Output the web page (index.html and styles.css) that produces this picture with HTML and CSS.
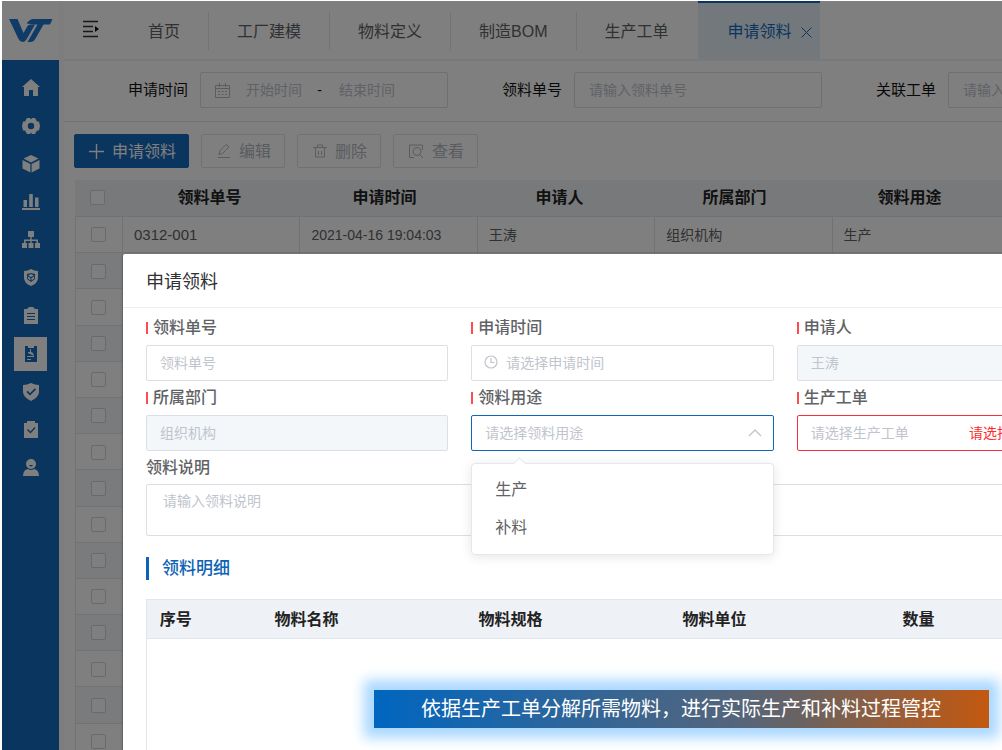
FILE: index.html
```html
<!DOCTYPE html>
<html lang="zh-CN">
<head>
<meta charset="utf-8">
<title>申请领料</title>
<link rel="stylesheet" href="styles.css">
</head>
<body>
<div class="app">
  <aside class="sidebar">
    <div class="logo">
      <svg width="44" height="24" viewBox="0 0 44 24" aria-label="VT" fill="#2076cc"><path d="M0 0h8.500l6 14 4-7q1-1.500 3-1.500H26l-8 14q-2 3.500-4.500 3.500T9.500 20z"/><path d="M17.500 4.500Q21 0 24 0h19.500L41 5.500h-6.500l-8 14q-2 3.500-5 3.500h-3l10-17.500h-3z"/></svg>
    </div>
    <nav class="side-nav">
      <a href="#" class="side-item" aria-label="首页"><svg viewBox="0 0 18 18"><path d="M9 0 0 8h2v9h5v-6h4v6h5V8h2z"/></svg></a>
      <a href="#" class="side-item" aria-label="设置"><svg viewBox="0 0 18 18"><path fill-rule="evenodd" d="M5 1h3l1 1.500L10 1h3l2 3.500h2L18 9l-1 4.500h-2L13 17h-3l-1-1.500L8 17H5l-2-3.500H1L0 9l1-4.500h2zM9 5.800a3.200 3.200 0 1 0 0 6.400 3.200 3.200 0 0 0 0-6.400z"/></svg></a>
      <a href="#" class="side-item" aria-label="物料"><svg viewBox="0 0 18 18"><path d="m9 0 7.500 3.500L9 7.500 1.500 3.500zM.5 5 8.400 9v8.500L.5 13.500zM17.500 5 9.600 9v8.500l7.900-4z"/></svg></a>
      <a href="#" class="side-item" aria-label="统计"><svg viewBox="0 0 18 18"><path d="M0 15h18v2H0zM1.500 7h3.500v7H1.500zM7.200 1h3.600v13H7.200zM13 4.500h3.500V14H13z"/></svg></a>
      <a href="#" class="side-item" aria-label="组织"><svg viewBox="0 0 18 18"><path d="M6 0h6v6H9.700v2.500H16V12h2v5h-5v-5h1.500v-2H9.700v2h1.800v5h-5v-5h1.800v-2H3.500v2H5v5H0v-5h2V8.500h6.300V6H6z"/></svg></a>
      <a href="#" class="side-item" aria-label="防护"><svg viewBox="0 0 18 18"><path fill-rule="evenodd" d="M9 0q3 2 7 2v7q0 5-7 8-7-3-7-8V2q4 0 7-2zM5 5v5l4 3 4-3V5L9 4z"/><path d="m9 5 3 1.500-3 1.500-3-1.500zM5.800 7.500 8.500 9v2.500l-2.700-2zM12.200 7.500 9.500 9v2.500l2.700-2z"/></svg></a>
      <a href="#" class="side-item" aria-label="单据"><svg viewBox="0 0 18 18"><path fill-rule="evenodd" d="M2 2h3l2-2h4l2 2h3v15H2zM5 6v1h8V6zM5 9v1h8V9zM5 12v1h8v-1z"/></svg></a>
      <a href="#" class="side-item side-item-active" aria-label="领料"><svg viewBox="0 0 18 18"><path fill-rule="evenodd" d="M3 1h3v2h6V1h3v16H3zM8 4v3H6v1l6 3-1-3-2-1V4zM5 11v1h7v-1zM5 14v1h4v-1z"/></svg></a>
      <a href="#" class="side-item" aria-label="质量"><svg viewBox="0 0 18 18"><path fill-rule="evenodd" d="M9 0q4 2 8 2v7q0 5-8 9-8-4-8-9V2q4 0 8-2zM4.500 9 8 12.500l6-6-1.200-1.200L8 10.200 5.700 7.800z"/></svg></a>
      <a href="#" class="side-item" aria-label="任务"><svg viewBox="0 0 18 18"><path fill-rule="evenodd" d="M2 2h3V0h8v2h3v15H2zM5 9l3.500 3.500L13.500 7l-1-1-4 4.500L6 8z"/></svg></a>
      <a href="#" class="side-item" aria-label="用户"><svg viewBox="0 0 18 18"><path fill-rule="evenodd" d="M9 0a5 5 0 0 1 5 5 5 5 0 0 1-10 0 5 5 0 0 1 5-5zM7 6q2 3 4 0zM6 10q3 2 6 0 5 1 5 7H1q0-6 5-7z"/></svg></a>
    </nav>
  </aside>

  <div class="main">
    <header class="topbar">
      <button class="fold" aria-label="展开菜单"><svg width="18" height="18" viewBox="0 0 18 18"><path d="M1 1.500h15M1 6.500h10M1 11.500h10M1 16.500h15" fill="none" stroke="#333" stroke-width="1.300"/><path d="m13 6 4 3-4 3z" fill="#111"/></svg></button>
      <nav class="tabs">
        <a href="#" class="tab">首页</a>
        <a href="#" class="tab">工厂建模</a>
        <a href="#" class="tab">物料定义</a>
        <a href="#" class="tab">制造BOM</a>
        <a href="#" class="tab">生产工单</a>
        <a href="#" class="tab tab-active">申请领料<svg width="11" height="11" viewBox="0 0 11 11"><path d="m.5.5 10 10M10.500.5l-10 10" stroke="currentColor" stroke-width="1"/></svg></a>
      </nav>
    </header>

    <form class="filters">
      <div class="filter">
        <label for="start">申请时间</label>
        <div class="range">
          <svg width="15" height="15" viewBox="0 0 15 15" fill="none" stroke="#b4b8c0"><path d="M.5 2.500h14v12H.5zM.5 5.500h14M4.500 0v4M10.500 0v4M3 8.500h2M6.500 8.500h2M10 8.500h2M3 11.500h2M6.500 11.500h2M10 11.500h2"/></svg>
          <input id="start" type="text" placeholder="开始时间">
          <span>-</span>
          <input type="text" placeholder="结束时间" aria-label="结束时间">
        </div>
      </div>
      <div class="filter"><label for="no">领料单号</label><input class="box" id="no" type="text" placeholder="请输入领料单号"></div>
      <div class="filter"><label for="wo">关联工单</label><input class="box" id="wo" type="text" placeholder="请输入关联工单"></div>
    </form>

    <div class="toolbar">
      <button class="btn btn-primary"><svg width="15" height="15" viewBox="0 0 15 15"><path d="M0 7.500h15M7.500 0v15" stroke="currentColor" stroke-width="1.400"/></svg>申请领料</button>
      <button class="btn" disabled><svg width="14" height="15" viewBox="0 0 14 15" fill="none" stroke="currentColor"><path d="M1 13.500h12M2 10.500l1-4 6-6 3 2.500-6.500 6.500z"/></svg>编辑</button>
      <button class="btn" disabled><svg width="14" height="15" viewBox="0 0 14 15" fill="none" stroke="currentColor"><path d="M0 3.500h14M4.500 3V1h5v2M2.500 4v9h9V4M5.500 7v4M8.500 7v4"/></svg>删除</button>
      <button class="btn" disabled><svg width="15" height="15" viewBox="0 0 15 15" fill="none" stroke="currentColor"><path d="M5 13.500H.5V1h13v5M11 11l3 3"/><circle cx="8" cy="7.500" r="4"/></svg>查看</button>
    </div>

    <div class="grid">
      <div class="grid-top">
        <table class="grid-head">
          <colgroup><col class="c-check"><col><col><col><col><col></colgroup>
          <thead><tr><th><input type="checkbox" aria-label="全选"></th><th>领料单号</th><th>申请时间</th><th>申请人</th><th>所属部门</th><th>领料用途</th></tr></thead>
        </table>
      </div>
      <table class="grid-body">
        <colgroup><col class="c-check"><col><col><col><col><col></colgroup>
        <tbody>
          <tr><td><input type="checkbox" aria-label="选择"></td><td class="code">0312-001</td><td>2021-04-16 19:04:03</td><td>王涛</td><td>组织机构</td><td>生产</td></tr>
          <tr><td><input type="checkbox" aria-label="选择"></td><td></td><td></td><td></td><td></td><td></td></tr>
          <tr><td><input type="checkbox" aria-label="选择"></td><td></td><td></td><td></td><td></td><td></td></tr>
          <tr><td><input type="checkbox" aria-label="选择"></td><td></td><td></td><td></td><td></td><td></td></tr>
          <tr><td><input type="checkbox" aria-label="选择"></td><td></td><td></td><td></td><td></td><td></td></tr>
          <tr><td><input type="checkbox" aria-label="选择"></td><td></td><td></td><td></td><td></td><td></td></tr>
          <tr><td><input type="checkbox" aria-label="选择"></td><td></td><td></td><td></td><td></td><td></td></tr>
          <tr><td><input type="checkbox" aria-label="选择"></td><td></td><td></td><td></td><td></td><td></td></tr>
          <tr><td><input type="checkbox" aria-label="选择"></td><td></td><td></td><td></td><td></td><td></td></tr>
          <tr><td><input type="checkbox" aria-label="选择"></td><td></td><td></td><td></td><td></td><td></td></tr>
          <tr><td><input type="checkbox" aria-label="选择"></td><td></td><td></td><td></td><td></td><td></td></tr>
          <tr><td><input type="checkbox" aria-label="选择"></td><td></td><td></td><td></td><td></td><td></td></tr>
          <tr><td><input type="checkbox" aria-label="选择"></td><td></td><td></td><td></td><td></td><td></td></tr>
          <tr><td><input type="checkbox" aria-label="选择"></td><td></td><td></td><td></td><td></td><td></td></tr>
          <tr><td><input type="checkbox" aria-label="选择"></td><td></td><td></td><td></td><td></td><td></td></tr>
        </tbody>
      </table>
    </div>
  </div>

  <div class="mask">
    <section class="modal" role="dialog" aria-labelledby="dlg-title">
      <h2 class="modal-title" id="dlg-title">申请领料</h2>
      <form class="modal-body">
        <div class="fields">
          <div class="field required"><label for="f1">领料单号</label><input class="box" id="f1" type="text" placeholder="领料单号"></div>
          <div class="field required"><label for="f2">申请时间</label>
            <div class="control"><svg class="clock" width="14" height="14" viewBox="0 0 14 14" fill="none" stroke="#c0c4cc" stroke-width="1.200"><circle cx="7" cy="7" r="6"/><path d="M7 3v4.500h3.500"/></svg><input class="box box-icon" id="f2" type="text" placeholder="请选择申请时间"></div>
          </div>
          <div class="field required"><label for="f3">申请人</label><input class="box" id="f3" type="text" value="王涛" disabled></div>
          <div class="field required"><label for="f4">所属部门</label><input class="box" id="f4" type="text" value="组织机构" disabled></div>
          <div class="field required"><label for="f5">领料用途</label>
            <div class="control">
              <select class="box box-focus" id="f5"><option>请选择领料用途</option></select>
              <svg class="arrow" width="14" height="8" viewBox="0 0 14 8"><path d="m1 7 6-6 6 6" fill="none" stroke="#c0c4cc" stroke-width="1.300"/></svg>
              <div class="menu">
                <button type="button">生产</button>
                <button type="button">补料</button>
              </div>
            </div>
          </div>
          <div class="field required"><label for="f6">生产工单</label>
            <div class="control"><input class="box box-error" id="f6" type="text" placeholder="请选择生产工单"><span class="error">请选择生产工单</span></div>
          </div>
          <div class="field field-wide"><label for="f7">领料说明</label><textarea class="box" id="f7" placeholder="请输入领料说明"></textarea></div>
        </div>
        <h3 class="section">领料明细</h3>
        <table class="detail">
          <colgroup><col class="d-no"><col class="d-main"><col class="d-main"><col class="d-main"><col class="d-main"><col></colgroup>
          <thead><tr><th>序号</th><th>物料名称</th><th>物料规格</th><th>物料单位</th><th>数量</th><th></th></tr></thead>
          <tbody><tr><td colspan="6"></td></tr></tbody>
        </table>
      </form>
    </section>
  </div>

  <p class="callout">依据生产工单分解所需物料，进行实际生产和补料过程管控</p>
</div>
</body>
</html>
```
FILE: styles.css
```css
* { box-sizing: border-box; }

body {
  margin: 0;
  padding: 1px 0 0 2px;
  height: 100vh;
  overflow: hidden;
  background: #fff;
  color: #606266;
  font: 14px/20px "Liberation Sans", "Noto Sans CJK SC", sans-serif;
}

input, select, textarea, button { font: inherit; color: inherit; margin: 0; }
a { color: inherit; text-decoration: none; }

.app {
  position: relative;
  display: flex;
  height: 100%;
  overflow: hidden;
  background: #fafafa;
}

/* Sidebar */
.sidebar { flex: none; width: 57px; background: #146abc; }
.logo {
  height: 59px;
  display: flex;
  align-items: center;
  justify-content: center;
  background: #fff;
}
.side-nav {
  display: flex;
  flex-direction: column;
  align-items: center;
  gap: 4px;
  padding-top: 11px;
}
.side-item {
  display: flex;
  align-items: center;
  justify-content: center;
  width: 33px;
  height: 34px;
}
.side-item svg { width: 18px; height: 18px; fill: #fff; }
.side-item-active { background: #fff; }
.side-item-active svg { fill: #146abc; }

/* Page */
.main { flex: 1; min-width: 0; margin-left: 5px; background: #fff; }
.topbar {
  display: flex;
  height: 60px;
  border-bottom: 2px solid #f2f2f2;
}
.fold {
  width: 56px;
  padding: 0 2px 4px 0;
  border: 0;
  background: none;
}
.fold svg { vertical-align: middle; }
.tabs { display: flex; white-space: nowrap; }
.tab {
  display: flex;
  align-items: center;
  gap: 9px;
  padding: 4px 28px 0;
  font-size: 16px;
  border-right: 1px solid;
  border-image: linear-gradient(transparent 12px, #e6e6e6 12px, #e6e6e6 48px, transparent 48px) 1;
}
.tab:nth-last-child(2) { border-color: transparent; border-image: none; }
.tab-active {
  padding: 2px 8px 0 30px;
  color: #146abc;
  background: #e6f1fa;
  border: 0;
  border-top: 2px solid #146abc;
}

.filters {
  display: flex;
  gap: 54px;
  padding: 11px 0 13px 64px;
  border-bottom: 1px solid #e8e8e8;
}
.filter { display: flex; align-items: center; gap: 12px; flex: none; }
.filter label { color: #111; font-size: 15px; white-space: nowrap; }

.box, .range {
  width: 100%;
  height: 36px;
  padding: 0 14px;
  border: 1px solid #dcdfe6;
  border-radius: 2px;
  background: #fff;
}
::placeholder { color: #c0c4cc; opacity: 1; }
.filter .box, .filter .range { flex: none; width: 248px; }
.range { display: flex; align-items: center; }
.range input { width: 68px; padding: 0; border: 0; background: none; }
.range svg { margin-right: 16px; }
.range span { width: 11px; margin-right: 14px; color: #111; text-align: center; }

.toolbar { display: flex; gap: 12px; padding: 12px 10px; }
.btn {
  display: flex;
  align-items: center;
  justify-content: center;
  gap: 8px;
  height: 34px;
  padding: 1px 13px 0 15px;
  font-size: 16px;
  color: #b4b8c0;
  background: #fff;
  border: 1px solid #dfe3ea;
  border-radius: 2px;
}
.btn-primary { padding: 1px 12px 0 14px; color: #fff; background: #146abc; border-color: #146abc; }

.grid { margin-left: 11px; overflow: hidden; }
.grid table { border-collapse: collapse; table-layout: fixed; }
.grid-top { background: #f0f2f5; }
.grid-head { width: 922px; }
.grid-body { width: 935px; height: 544px; }
.c-check { width: 47px; }
.grid th { height: 36px; padding: 0; font-size: 16px; color: #222; }
.grid td { height: 36px; padding: 0 11px; border: 1px solid #dfe6ec; }
.grid th:first-child, .grid td:first-child { padding: 0 2px 2px 0; text-align: center; }
.grid tr:nth-child(even) { background: #f4f6fa; }
.grid .code { font-size: 15px; }
input[type="checkbox"] {
  appearance: none;
  display: inline-block;
  width: 15px;
  height: 15px;
  vertical-align: middle;
  border: 1px solid #d0d4da;
  border-radius: 2px;
  background: #fff;
}

/* Dialog */
.mask {
  position: absolute;
  inset: 0;
  overflow: hidden;
  padding: 253px 0 0 121px;
  background: rgba(0, 0, 0, 0.5);
}
.modal {
  height: 100%;
  margin-right: -120px;
  background: #fff;
  border-radius: 2px 2px 0 0;
  box-shadow: 0 1px 3px rgba(0, 0, 0, 0.3);
}
.modal-title {
  margin: 0;
  padding: 16px 23px 13px;
  font-size: 18px;
  line-height: 24px;
  font-weight: 400;
  color: #303133;
  border-bottom: 1px solid #ebeef0;
}
.modal-body { padding: 3px 23px 0; }
.fields { display: grid; grid-template-columns: repeat(3, 1fr); column-gap: 23px; }
.field { display: flex; flex-direction: column; }
.field-wide { grid-column: 1 / -1; }
.field label {
  display: flex;
  align-items: center;
  gap: 5px;
  height: 34px;
  font-size: 16px;
  font-weight: 500;
}
.required label::before { content: ""; width: 2px; height: 12px; background: #ff4d4f; }
.control { position: relative; }
.field .box { display: block; padding: 0 13px; }
.field .box:disabled { padding-bottom: 2px; color: #c0c4cc; background: #f3f7fa; }
.field .box-icon { padding-left: 34px; }
.field .box-focus { appearance: none; border-color: #1067b8; color: #c0c4cc; }
.field .box-error { border-color: #f5323c; }
.field-wide label { height: 33px; }
.field textarea.box { height: 52px; padding: 6px 16px; resize: none; }
.clock { position: absolute; left: 13px; top: 10px; }
.arrow { position: absolute; right: 12px; top: 14px; }
.error { position: absolute; right: 32px; top: 8px; color: #ff2d2d; }

.menu {
  position: absolute;
  z-index: 2;
  top: 48px;
  left: 0;
  right: 0;
  padding: 7px 0;
  background: #fff;
  border: 1px solid #e4e7ed;
  border-radius: 4px;
  box-shadow: 0 2px 12px rgba(0, 0, 0, 0.1);
}
.menu::before {
  content: "";
  position: absolute;
  top: -5px;
  left: 43px;
  width: 8px;
  height: 8px;
  background: #fff;
  border: solid #e4e7ed;
  border-width: 1px 0 0 1px;
  transform: rotate(45deg);
}
.menu button {
  display: block;
  width: 100%;
  height: 38px;
  padding: 0 23px;
  font-size: 16px;
  text-align: left;
  background: none;
  border: 0;
}

.section {
  margin: 21px 0 19px;
  padding-left: 13px;
  font-size: 17px;
  line-height: 23px;
  font-weight: 500;
  color: #0c62b5;
  border-left: 3px solid #0c62b5;
}
.detail {
  width: 100%;
  table-layout: fixed;
  border-collapse: collapse;
  border: 1px solid #dfe6ec;
}
.d-no { width: 58px; }
.d-main { width: 204px; }
.detail th {
  height: 39px;
  padding: 2px 0 0;
  font-size: 16px;
  color: #222;
  background: #eef1f5;
  border-bottom: 1px solid #dfe6ec;
}
.detail td { height: 160px; }

/* Caption laid over the dialog */
.callout {
  position: absolute;
  z-index: 3;
  right: 13px;
  bottom: 22px;
  margin: 0;
  padding: 0 48px 0 47px;
  font-size: 20px;
  line-height: 38px;
  white-space: nowrap;
  color: #fff;
  background: linear-gradient(90deg, #0066bf, #56657a 60%, #6b625f 70%, #c4580f);
  box-shadow: 0 0 12px 10px #aad8ff;
}
```
